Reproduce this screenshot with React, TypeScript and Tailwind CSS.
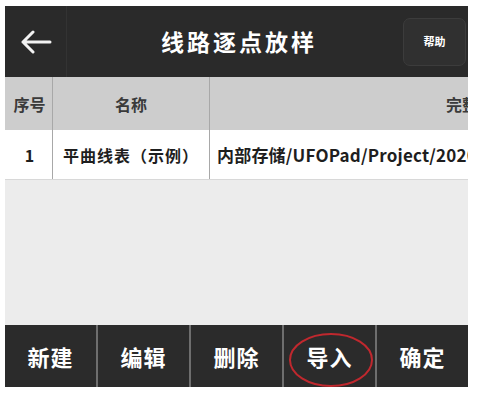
import React from "react";

const font = { fontFamily: '"Noto Sans CJK SC", "Noto Sans", sans-serif' };

export default function App() {
  const btns = ["新建", "编辑", "删除", "导入", "确定"];
  return (
    <div className="w-[479px] h-[399px] bg-white pt-[6px] pl-[5px] overflow-hidden" style={font}>
      <div className="w-[463px] h-[381px] flex flex-col">
        {/* Header */}
        <div className="h-[71px] bg-[#2a2a2a] flex items-center relative shrink-0">
          <div className="w-[62px] h-full flex items-center justify-center border-r border-[#333333]">
            <svg width="32" height="24" viewBox="0 0 32 24" fill="none">
              <path d="M30 12H3M13 2L3 12l10 10" stroke="#f2f2f2" strokeWidth="3" strokeLinecap="round" strokeLinejoin="round" />
            </svg>
          </div>
          <div className="flex-1 text-center text-white font-bold text-[23px] tracking-[3px] pl-[8px]">线路逐点放样</div>
          <div className="w-[63px] h-[48px] mr-[2px] rounded-[7px] bg-[#303030] border border-[#3c3c3c] flex items-center justify-center text-white font-bold text-[11px]">
            帮助
          </div>
        </div>
        {/* Table header */}
        <div className="h-[53px] bg-[#cdcdcd] flex shrink-0 text-[#3a3a3a] font-bold text-[16px]">
          <div className="w-[48px] flex items-center justify-center border-r border-[#a8a8a8] pl-[2px]">序号</div>
          <div className="w-[157px] flex items-center justify-center border-r border-[#a8a8a8]">名称</div>
          <div className="flex-1 flex items-center overflow-hidden whitespace-nowrap pl-[236px]">完整路径</div>
        </div>
        {/* Row */}
        <div className="h-[50px] bg-white flex shrink-0 text-[#1e1e1e] font-bold text-[16px] border-b border-[#d8d8d8]">
          <div className="w-[48px] flex items-center justify-center border-r border-[#a8a8a8] pl-[2px]">1</div>
          <div className="w-[157px] flex items-center justify-center border-r border-[#a8a8a8] tracking-[1px] whitespace-nowrap">平曲线表（示例）</div>
          <div className="flex-1 flex items-center overflow-hidden whitespace-nowrap pl-[7px] text-[17px] tracking-[0.2px]">内部存储/UFOPad/Project/2020</div>
        </div>
        {/* Empty area */}
        <div className="flex-1 bg-[#ececec]" />
        {/* Footer */}
        <div className="h-[62px] bg-[#2b2b2b] flex shrink-0 relative">
          {btns.map((b, i) => (
            <div
              key={b}
              className={`flex-1 flex items-center justify-center text-white font-bold text-[22px] tracking-[1px] ${i < 4 ? "border-r-2 border-[#6e6e6e]" : ""}`}
            >
              {b}
            </div>
          ))}
          <svg className="absolute left-[282px] top-[6px]" width="88" height="58" viewBox="0 0 88 58" fill="none">
            <ellipse cx="44" cy="29" rx="41" ry="26" stroke="#c0282e" strokeWidth="2" />
          </svg>
        </div>
      </div>
    </div>
  );
}
